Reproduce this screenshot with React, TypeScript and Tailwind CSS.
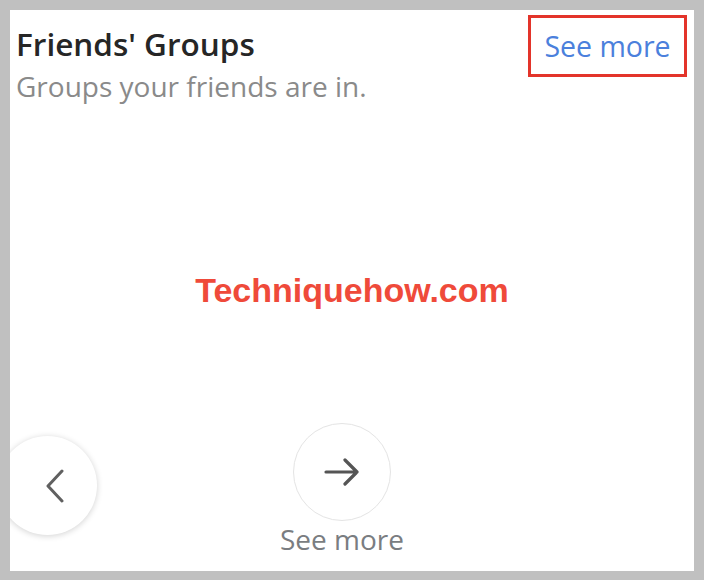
import React from 'react';

export default function App() {
  return (
    <div className="w-[704px] h-[580px] bg-[#c0c0c0] p-[10px] pb-[9px]">
      <div className="relative h-full w-full overflow-hidden bg-white" style={{ fontFamily: '"Open Sans", "Noto Sans", sans-serif' }}>
        {/* header */}
        <div className="flex items-start justify-between">
          <div className="pl-[6px] pt-[14px]">
            <h2 className="text-[31.5px] font-semibold leading-[40px] text-[#262626]">Friends' Groups</h2>
            <p className="mt-[4px] text-[28px] leading-[36px] text-[#8a8a8a]">Groups your friends are in.</p>
          </div>
          <div className="mr-[7px] mt-[5px] flex h-[62px] w-[159px] items-center justify-center border-[3px] border-[#e3342a]">
            <span className="text-[28.5px] leading-none text-[#4b80dc]">See more</span>
          </div>
        </div>

        {/* watermark */}
        <div className="mt-[169px] text-center">
          <span
            className="text-[34px] font-bold leading-none text-[#ef4a3a]"
            style={{ fontFamily: '"Liberation Sans", Arial, sans-serif' }}
          >
            Techniquehow.com
          </span>
        </div>

        {/* carousel controls */}
        <div className="absolute left-[-12px] top-[426px] flex h-[99px] w-[99px] items-center justify-center rounded-full bg-white shadow-[0_1px_6px_rgba(0,0,0,0.18)]">
          <svg width="20" height="34" viewBox="0 0 20 34" className="ml-[14px]">
            <path d="M17 2 L3 17 L17 32" fill="none" stroke="#606060" strokeWidth="3" strokeLinecap="round" strokeLinejoin="round" />
          </svg>
        </div>

        <div className="absolute left-[283px] top-[413px] flex flex-col items-center">
          <div className="flex h-[98px] w-[98px] items-center justify-center rounded-full border border-[#e4e4e4] bg-white">
            <svg width="36" height="28" viewBox="0 0 36 28">
              <path d="M2 14 H33 M21 2 L33 14 L21 26" fill="none" stroke="#555" strokeWidth="3.2" strokeLinecap="round" strokeLinejoin="round" />
            </svg>
          </div>
        </div>
        <div className="absolute left-[232px] top-[510px] w-[200px] text-center text-[28px] leading-[38px] text-[#7a7d81]">See more</div>
      </div>
    </div>
  );
}
